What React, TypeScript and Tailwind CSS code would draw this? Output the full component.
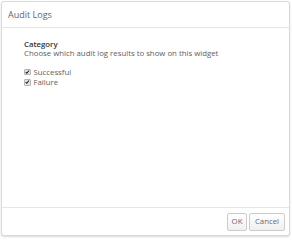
function Check({ label }: { label: string }) {
  return (
    <label className="flex h-[10.5px] items-center gap-[2px] leading-[10px]">
      <span className="flex h-[6.5px] w-[6.5px] items-center justify-center rounded-[1px] border border-[#b5b5b5] bg-[#e4e4e4]">
        <svg viewBox="0 0 8 8" className="h-[6px] w-[6px]">
          <path d="M1.2 4.3 L3.2 6.2 L7 1.4" fill="none" stroke="#1a1a1a" strokeWidth="1.8" />
        </svg>
      </span>
      <span className="ml-[1px]">{label}</span>
    </label>
  );
}

export default function App() {
  return (
    <div
      className="h-[240px] w-[292px] bg-white p-px"
      style={{ fontFamily: '"Open Sans", sans-serif' }}
    >
      <div className="flex h-[235px] w-[289px] flex-col rounded-[3px] border border-[#dadada] bg-white shadow-[0_1px_2px_rgba(0,0,0,0.15)]">
        <div className="flex h-[26px] items-center border-b border-[#e6e6e6] px-[6px] text-[9px] text-[#666]">
          Audit Logs
        </div>
        <div className="flex-1 px-[22px] pt-[12px] text-[7.8px] text-[#606060]">
          <div className="font-semibold leading-[9px] text-[#333]">Category</div>
          <div className="leading-[9px]">Choose which audit log results to show on this widget</div>
          <div className="mt-[8.5px] flex flex-col">
            <Check label="Successful" />
            <Check label="Failure" />
          </div>
        </div>
        <div className="flex h-[28px] items-center justify-end gap-[2px] border-t border-[#e6e6e6] pr-[4px]">
          <button className="h-[18px] w-[20px] rounded-[2px] border border-[#ccc] bg-gradient-to-b from-white to-[#f0f0f0] text-[7.8px] text-[#666]">
            OK
          </button>
          <button className="h-[18px] w-[36px] rounded-[2px] border border-[#ccc] bg-gradient-to-b from-white to-[#f0f0f0] text-[7.8px] text-[#666]">
            Cancel
          </button>
        </div>
      </div>
    </div>
  );
}
